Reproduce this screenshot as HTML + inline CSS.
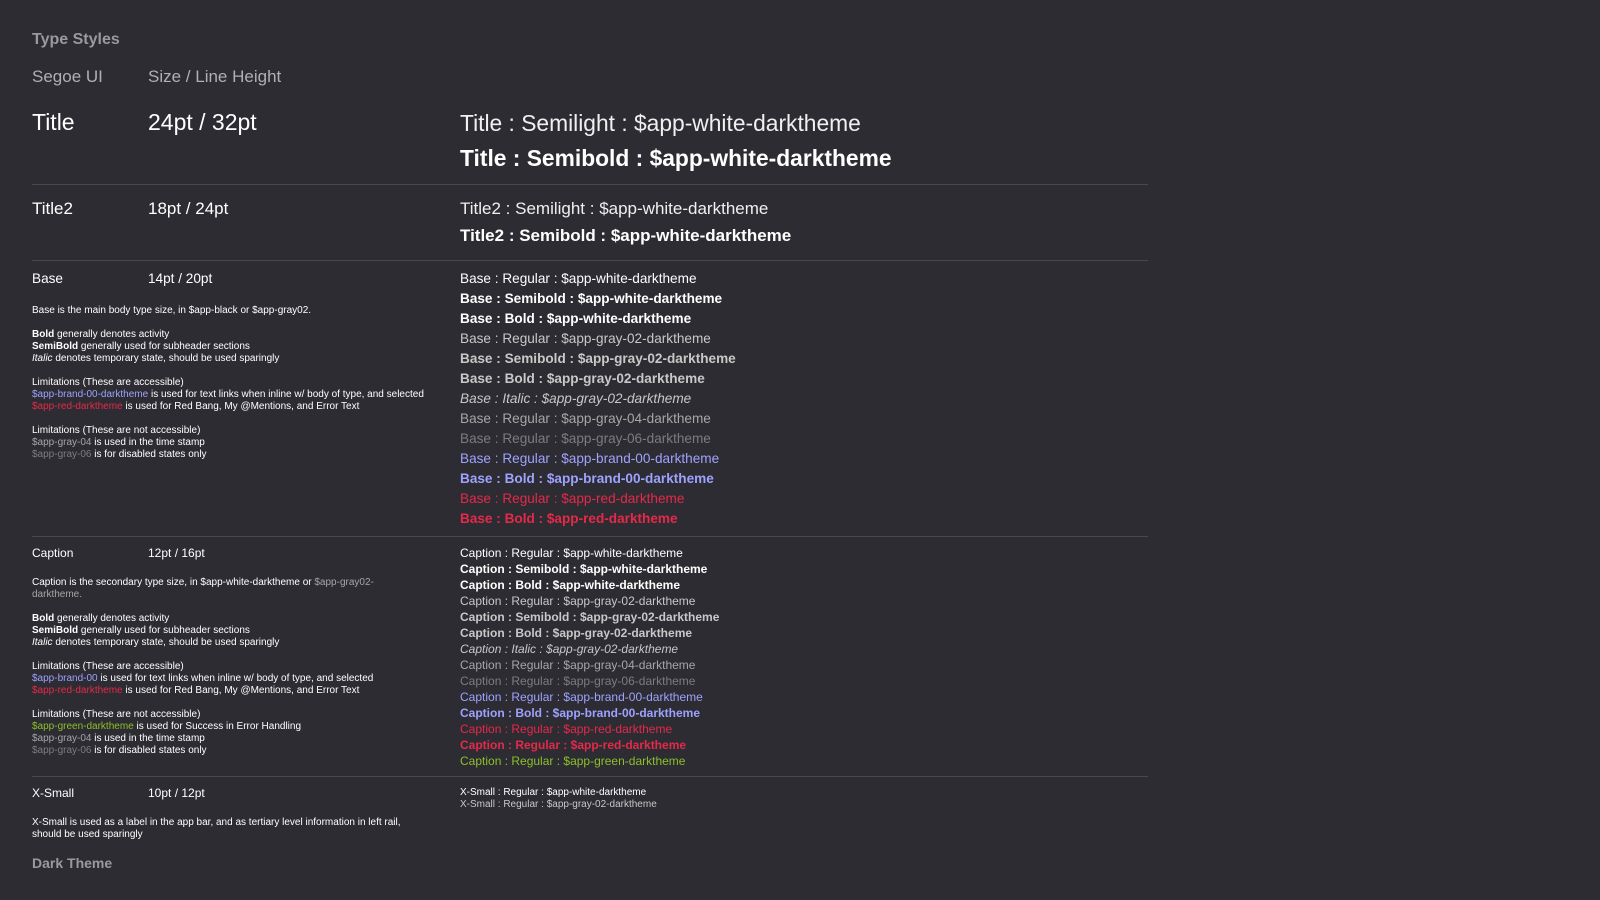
<!DOCTYPE html>
<html><head><meta charset="utf-8"><style>
body{margin:0;width:1600px;height:900px;background:#2d2c32;font-family:"Liberation Sans",sans-serif;color:#fff;position:relative;overflow:hidden}
.t{position:absolute;white-space:nowrap;line-height:20px}
.hr{position:absolute;left:32px;width:1116px;height:1px;background:#4a494f}
.w{color:#fff}.g2{color:#c8c8c8}.g4{color:#a6a6a6}.g6{color:#7c7c80}.br{color:#9ea2ff}.rd{color:#e5294a}.gr{color:#8cbf2a}
.sb{font-weight:bold}.b{font-weight:bold}.i{font-style:italic}
.s10{font-size:10px}.s12{font-size:12px}.s14{font-size:13.6px}
</style></head><body>
<div class="t" style="left:32px;top:30px;font-size:16px;font-weight:bold;color:#9a9a9e">Type Styles</div>
<div class="t" style="left:32px;top:67px;font-size:17px;color:#b0b0b4">Segoe UI</div>
<div class="t" style="left:148px;top:67px;font-size:17px;color:#b0b0b4">Size / Line Height</div>

<div class="t" style="left:32px;top:110px;font-size:23px;line-height:24px">Title</div>
<div class="t" style="left:148px;top:110px;font-size:23px;line-height:24px">24pt / 32pt</div>
<div class="t" style="left:460px;top:111px;font-size:22.8px;line-height:24px;color:#f0f0f0">Title : Semilight : $app-white-darktheme</div>
<div class="t b" style="left:460px;top:146px;font-size:22.8px;line-height:24px">Title : Semibold : $app-white-darktheme</div>
<div class="hr" style="top:184px"></div>

<div class="t" style="left:32px;top:199px;font-size:17px">Title2</div>
<div class="t" style="left:148px;top:199px;font-size:17px">18pt / 24pt</div>
<div class="t" style="left:460px;top:199px;font-size:17px;color:#f0f0f0">Title2 : Semilight : $app-white-darktheme</div>
<div class="t b" style="left:460px;top:226px;font-size:17px">Title2 : Semibold : $app-white-darktheme</div>
<div class="hr" style="top:260px"></div>

<div class="t s14" style="left:32px;top:269px">Base</div>
<div class="t s14" style="left:148px;top:269px">14pt / 20pt</div>
<div class="s14" style="position:absolute;left:460px;top:269px;line-height:20px;white-space:nowrap">
<div class="w">Base : Regular : $app-white-darktheme</div>
<div class="w sb">Base : Semibold : $app-white-darktheme</div>
<div class="w b">Base : Bold : $app-white-darktheme</div>
<div class="g2">Base : Regular : $app-gray-02-darktheme</div>
<div class="g2 sb">Base : Semibold : $app-gray-02-darktheme</div>
<div class="g2 b">Base : Bold : $app-gray-02-darktheme</div>
<div class="g2 i">Base : Italic : $app-gray-02-darktheme</div>
<div class="g4">Base : Regular : $app-gray-04-darktheme</div>
<div class="g6">Base : Regular : $app-gray-06-darktheme</div>
<div class="br">Base : Regular : $app-brand-00-darktheme</div>
<div class="br b">Base : Bold : $app-brand-00-darktheme</div>
<div class="rd">Base : Regular : $app-red-darktheme</div>
<div class="rd b">Base : Bold : $app-red-darktheme</div>
</div>
<div class="s10" style="position:absolute;left:32px;top:305px;line-height:12px;white-space:nowrap">
<div>Base is the main body type size, in $app-black or $app-gray02.</div>
<div>&nbsp;</div>
<div><b>Bold</b> generally denotes activity</div>
<div><b>SemiBold</b> generally used for subheader sections</div>
<div><i>Italic</i> denotes temporary state, should be used sparingly</div>
<div>&nbsp;</div>
<div>Limitations (These are accessible)</div>
<div><span class="br">$app-brand-00-darktheme</span> is used for text links when inline w/ body of type, and selected</div>
<div><span class="rd">$app-red-darktheme</span> is used for Red Bang, My @Mentions, and Error Text</div>
<div>&nbsp;</div>
<div>Limitations (These are not accessible)</div>
<div><span class="g4">$app-gray-04</span> is used in the time stamp</div>
<div><span class="g6">$app-gray-06</span> is for disabled states only</div>
</div>
<div class="hr" style="top:536px"></div>

<div class="t s12" style="left:32px;top:543px">Caption</div>
<div class="t s12" style="left:148px;top:543px">12pt / 16pt</div>
<div class="s12" style="position:absolute;left:460px;top:545px;line-height:16px;white-space:nowrap">
<div class="w">Caption : Regular : $app-white-darktheme</div>
<div class="w sb">Caption : Semibold : $app-white-darktheme</div>
<div class="w b">Caption : Bold : $app-white-darktheme</div>
<div class="g2">Caption : Regular : $app-gray-02-darktheme</div>
<div class="g2 sb">Caption : Semibold : $app-gray-02-darktheme</div>
<div class="g2 b">Caption : Bold : $app-gray-02-darktheme</div>
<div class="g2 i">Caption : Italic : $app-gray-02-darktheme</div>
<div class="g4">Caption : Regular : $app-gray-04-darktheme</div>
<div class="g6">Caption : Regular : $app-gray-06-darktheme</div>
<div class="br">Caption : Regular : $app-brand-00-darktheme</div>
<div class="br b">Caption : Bold : $app-brand-00-darktheme</div>
<div class="rd">Caption : Regular : $app-red-darktheme</div>
<div class="rd b">Caption : Regular : $app-red-darktheme</div>
<div class="gr">Caption : Regular : $app-green-darktheme</div>
</div>
<div class="s10" style="position:absolute;left:32px;top:577px;line-height:12px;white-space:nowrap">
<div>Caption is the secondary type size, in $app-white-darktheme or <span class="g4">$app-gray02-</span></div>
<div class="g4">darktheme.</div>
<div>&nbsp;</div>
<div><b>Bold</b> generally denotes activity</div>
<div><b>SemiBold</b> generally used for subheader sections</div>
<div><i>Italic</i> denotes temporary state, should be used sparingly</div>
<div>&nbsp;</div>
<div>Limitations (These are accessible)</div>
<div><span class="br">$app-brand-00</span> is used for text links when inline w/ body of type, and selected</div>
<div><span class="rd">$app-red-darktheme</span> is used for Red Bang, My @Mentions, and Error Text</div>
<div>&nbsp;</div>
<div>Limitations (These are not accessible)</div>
<div><span class="gr">$app-green-darktheme</span> is used for Success in Error Handling</div>
<div><span class="g4">$app-gray-04</span> is used in the time stamp</div>
<div><span class="g6">$app-gray-06</span> is for disabled states only</div>
</div>
<div class="hr" style="top:776px"></div>

<div class="t s12" style="left:32px;top:783px">X-Small</div>
<div class="t s12" style="left:148px;top:783px">10pt / 12pt</div>
<div class="s10" style="position:absolute;left:460px;top:787px;line-height:12px;white-space:nowrap">
<div class="w">X-Small : Regular : $app-white-darktheme</div>
<div class="g2">X-Small : Regular : $app-gray-02-darktheme</div>
</div>
<div class="s10" style="position:absolute;left:32px;top:817px;line-height:12px;white-space:nowrap">
<div>X-Small is used as a label in the app bar, and as tertiary level information in left rail,</div>
<div>should be used sparingly</div>
</div>
<div class="t" style="left:32px;top:853px;font-size:14px;font-weight:bold;color:#9a9a9e">Dark Theme</div>
</body></html>
